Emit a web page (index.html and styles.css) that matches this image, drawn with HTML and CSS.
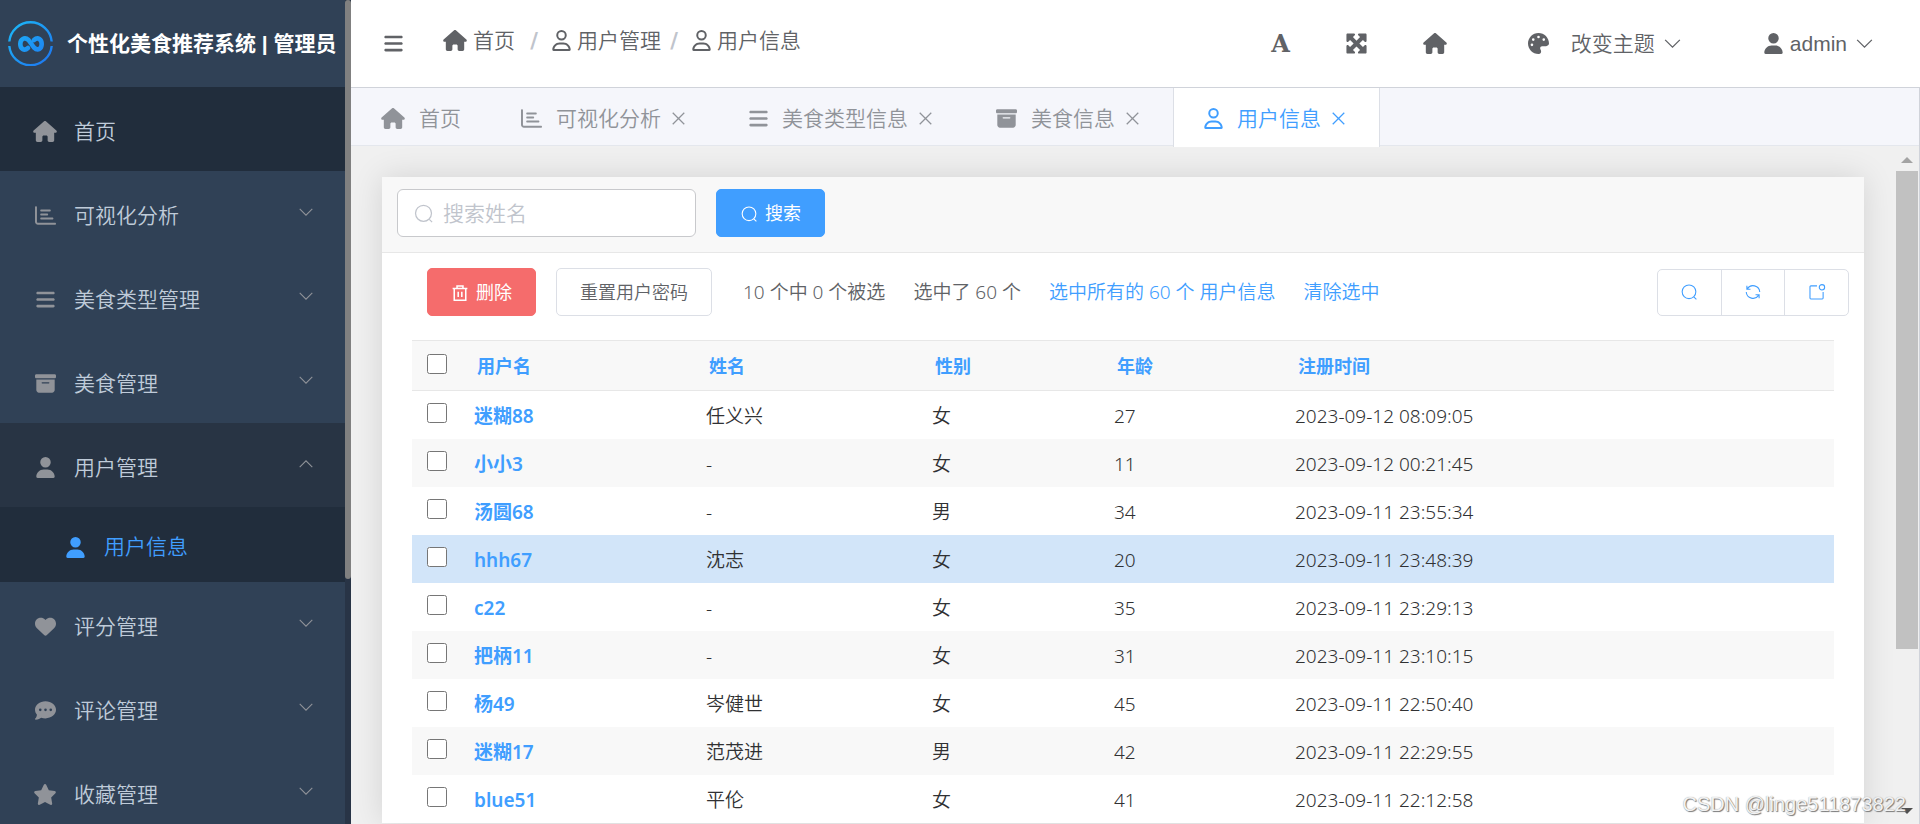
FILE: index.html
```html
<!DOCTYPE html>
<html lang="zh-CN">
<head>
<meta charset="utf-8">
<title>个性化美食推荐系统 | 管理员</title>
<link rel="stylesheet" href="styles.css">
</head>
<body>
<svg class="sprite" aria-hidden="true">
  <symbol id="house" viewBox="0 0 576 512"><path d="M575.8 255.500c0 18-15 32.100-32 32.100h-32l.7 160.200c0 2.700-.2 5.400-.5 8.100V472c0 22.100-17.900 40-40 40H392c-22.100 0-40-17.900-40-40V384c0-17.700-14.300-32-32-32H256c-17.700 0-32 14.300-32 32v88c0 22.100-17.900 40-40 40H104c-22.100 0-40-17.900-40-40V287.600H32c-18 0-32-14-32-32.100c0-9 3-17 10-24L266.400 8c7-7 15-8 22-8s15 2 21 7L564.800 231.500c8 7 12 15 11 24z"/></symbol>
  <symbol id="user" viewBox="0 0 448 512"><path d="M224 256A128 128 0 1 0 224 0a128 128 0 1 0 0 256zm-45.700 48C79.800 304 0 383.800 0 482.300C0 498.700 13.300 512 29.700 512H418.300c16.400 0 29.700-13.300 29.700-29.700C448 383.800 368.200 304 269.700 304H178.300z"/></symbol>
  <symbol id="user-line" viewBox="0 0 448 512"><path d="M304 128a80 80 0 1 0 -160 0 80 80 0 1 0 160 0zM96 128a128 128 0 1 1 256 0A128 128 0 1 1 96 128zM49.300 464H398.700c-8.900-63.300-63.300-112-129-112H178.300c-65.700 0-120.100 48.700-129 112zM0 482.300C0 383.800 79.800 304 178.300 304h91.400C368.200 304 448 383.800 448 482.300c0 16.400-13.300 29.700-29.700 29.700H29.700C13.300 512 0 498.700 0 482.300z"/></symbol>
  <symbol id="bars" viewBox="0 0 448 512"><path d="M0 96C0 78.300 14.300 64 32 64H416c17.700 0 32 14.300 32 32s-14.300 32-32 32H32C14.300 128 0 113.700 0 96zM0 256c0-17.700 14.300-32 32-32H416c17.700 0 32 14.300 32 32s-14.300 32-32 32H32c-17.700 0-32-14.300-32-32zM448 416c0 17.700-14.300 32-32 32H32c-17.700 0-32-14.300-32-32s14.300-32 32-32H416c17.700 0 32 14.300 32 32z"/></symbol>
  <symbol id="box" viewBox="0 0 512 512"><path d="M32 32H480c17.700 0 32 14.300 32 32V96c0 17.700-14.300 32-32 32H32C14.300 128 0 113.700 0 96V64C0 46.300 14.300 32 32 32zm0 128H480V416c0 35.300-28.700 64-64 64H96c-35.300 0-64-28.700-64-64V160zm128 80c0 8.800 7.200 16 16 16H336c8.800 0 16-7.200 16-16s-7.200-16-16-16H176c-8.800 0-16 7.200-16 16z"/></symbol>
  <symbol id="chart" viewBox="0 0 512 512"><path d="M24 32c13.300 0 24 10.700 24 24V408c0 13.300 10.700 24 24 24H488c13.300 0 24 10.700 24 24s-10.700 24-24 24H72c-39.800 0-72-32.200-72-72V56C0 42.700 10.700 32 24 32zM128 136c0-13.300 10.700-24 24-24l208 0c13.300 0 24 10.700 24 24s-10.700 24-24 24l-208 0c-13.300 0-24-10.700-24-24zm24 72H296c13.300 0 24 10.700 24 24s-10.700 24-24 24H152c-13.300 0-24-10.700-24-24s10.700-24 24-24zm0 96H424c13.300 0 24 10.700 24 24s-10.700 24-24 24H152c-13.300 0-24-10.700-24-24s10.700-24 24-24z"/></symbol>
  <symbol id="heart" viewBox="0 0 512 512"><path d="M47.600 300.400L228.300 469.100c7.500 7 17.400 10.900 27.700 10.900s20.200-3.900 27.700-10.900L464.400 300.400c30.400-28.300 47.600-68 47.600-109.500v-5.800c0-69.900-50.500-129.500-119.400-141C347 36.500 300.600 51.400 268 84L256 96 244 84c-32.600-32.600-79-47.500-124.600-39.900C50.500 55.600 0 115.200 0 185.100v5.800c0 41.500 17.200 81.200 47.600 109.500z"/></symbol>
  <symbol id="comment" viewBox="0 0 512 512"><path fill-rule="evenodd" d="M256 448c141.400 0 256-93.100 256-208S397.400 32 256 32S0 125.100 0 240c0 45.100 17.700 86.800 47.700 120.900c-1.900 24.500-11.400 46.300-21.400 62.900c-5.500 9.200-11.100 16.600-15.200 21.600c-2.100 2.500-3.700 4.400-4.900 5.700l-1.600 1.700c-4.600 4.600-5.900 11.400-3.400 17.400c2.500 6 8.300 9.900 14.800 9.900c28.700 0 57.600-8.900 81.600-19.300c22.900-10 42.400-21.900 54.300-30.600c31.800 11.500 67 17.900 104.100 17.900zM128 208a32 32 0 1 1 0 64 32 32 0 1 1 0-64zm128 0a32 32 0 1 1 0 64 32 32 0 1 1 0-64zm128 0a32 32 0 1 1 0 64 32 32 0 1 1 0-64z"/></symbol>
  <symbol id="star" viewBox="0 0 576 512"><path d="M316.900 18C311.600 7 300.400 0 288.100 0s-23.400 7-28.800 18L195 150.300 51.400 171.500c-12 1.800-22 10.200-25.700 21.700s-.7 24.200 7.900 32.700L137.800 329 113.200 474.700c-2 12 3 24.200 12.900 31.300s23 8 33.800 2.300l128.300-68.500 128.300 68.500c10.800 5.700 23.900 4.900 33.800-2.300s14.900-19.300 12.900-31.300L438.500 329 542.700 225.900c8.600-8.500 11.700-21.200 7.900-32.700s-13.700-19.900-25.700-21.700L381.200 150.300 316.900 18z"/></symbol>
  <symbol id="palette" viewBox="0 0 512 512"><path fill-rule="evenodd" d="M512 256c0 .9 0 1.800 0 2.700c-.4 36.500-33.600 61.300-70.100 61.300H344c-26.500 0-48 21.500-48 48c0 3.400 .4 6.700 1 9.900c2.100 10.200 6.500 20 10.800 29.900c6.100 13.800 12.100 27.500 12.100 42c0 31.800-21.600 60.700-53.400 62c-3.500 .1-7 .2-10.600 .2C114.600 512 0 397.400 0 256S114.600 0 256 0S512 114.600 512 256zM128 288a32 32 0 1 0 -64 0 32 32 0 1 0 64 0zm0-96a32 32 0 1 0 0-64 32 32 0 1 0 0 64zM288 96a32 32 0 1 0 -64 0 32 32 0 1 0 64 0zm96 96a32 32 0 1 0 0-64 32 32 0 1 0 0 64z"/></symbol>
  <symbol id="expand" viewBox="0 0 512 512"><path d="M200 32H56C42.700 32 32 42.700 32 56V200c0 9.700 5.800 18.500 14.800 22.200s19.300 1.700 26.200-5.200l40-40 79 79-79 79L73 295c-6.900-6.900-17.200-8.900-26.200-5.200S32 302.300 32 312V456c0 13.300 10.700 24 24 24H200c9.700 0 18.500-5.800 22.200-14.800s1.700-19.300-5.200-26.200l-40-40 79-79 79 79-40 40c-6.900 6.900-8.900 17.200-5.200 26.200s12.500 14.800 22.200 14.800H456c13.300 0 24-10.700 24-24V312c0-9.700-5.800-18.500-14.800-22.200s-19.300-1.700-26.200 5.200l-40 40-79-79 79-79 40 40c6.900 6.900 17.200 8.900 26.200 5.200s14.800-12.500 14.800-22.200V56c0-13.300-10.700-24-24-24H312c-9.700 0-18.500 5.800-22.200 14.800s-1.700 19.300 5.200 26.200l40 40-79 79-79-79 40-40c6.900-6.900 8.900-17.200 5.200-26.200S209.700 32 200 32z"/></symbol>
  <symbol id="down" viewBox="0 0 20 20"><path class="line" d="M3 6.500 10 13.500 17 6.500"/></symbol>
  <symbol id="up" viewBox="0 0 20 20"><path class="line" d="M3 13.500 10 6.500 17 13.500"/></symbol>
  <symbol id="close" viewBox="0 0 20 20"><path class="line" d="M4.500 4.500 15.500 15.500M15.500 4.500 4.500 15.500"/></symbol>
  <symbol id="search" viewBox="0 0 20 20"><path class="line" d="M10 2.200a7.600 7.600 0 1 1 0 15.200a7.600 7.600 0 1 1 0-15.200M15.300 15.400 18.200 18.200"/></symbol>
  <symbol id="trash" viewBox="0 0 20 20"><path class="line thick" d="M1.800 5H18.200M6.700 5V2.200H13.300V5M3.600 5V18H16.400V5M8 8.500V14.500M12 8.500V14.500"/></symbol>
  <symbol id="refresh" viewBox="0 0 20 20"><path class="line" d="M3.200 3V7H7.200M3.600 6.600A7.500 7.500 0 0 1 17.500 10M16.800 17V13H12.800M16.400 13.400A7.500 7.500 0 0 1 2.500 10"/></symbol>
  <symbol id="badge" viewBox="0 0 20 20"><path class="line" d="M10 3.200H3.200a1 1 0 0 0-1 1V16.800a1 1 0 0 0 1 1H15.800a1 1 0 0 0 1-1V10M15.500 1.800a3 3 0 1 1 0 6a3 3 0 1 1 0-6"/></symbol>
</svg>

<aside class="sidebar">
  <div class="sidebar-body">
    <div class="brand">
      <svg class="logo" viewBox="0 0 45 45" aria-hidden="true">
        <defs><linearGradient id="g" gradientUnits="userSpaceOnUse" x1="0" y1="0" x2="45" y2="45"><stop offset="0" stop-color="#1cbcf8"/><stop offset="1" stop-color="#1e72f0"/></linearGradient></defs>
        <path stroke="url(#g)" stroke-width="2.400" d="M1.300 20.500A21.300 21.300 0 0 1 43.700 20.500M1.300 25A21.300 21.300 0 0 0 43.700 25"/>
        <path stroke="url(#g)" stroke-width="4.600" stroke-linecap="round" d="M20 27C16 30.500 12.300 27.500 12.300 23C12.300 18.500 16.500 15.200 20.500 19L26 26.500C30 30.500 33.700 27.500 33.700 23C33.700 18.500 30 15.500 26 19"/>
      </svg>
      <strong>个性化美食推荐系统 | 管理员</strong>
    </div>
    <nav class="menu">
      <a class="item dark" href="#"><span class="ico"><svg class="w24"><use href="#house"/></svg></span>首页</a>
      <a class="item" href="#"><span class="ico"><svg class="w21"><use href="#chart"/></svg></span>可视化分析<svg class="arrow"><use href="#down"/></svg></a>
      <a class="item" href="#"><span class="ico"><svg class="w18"><use href="#bars"/></svg></span>美食类型管理<svg class="arrow"><use href="#down"/></svg></a>
      <a class="item" href="#"><span class="ico"><svg class="w21"><use href="#box"/></svg></span>美食管理<svg class="arrow"><use href="#down"/></svg></a>
      <a class="item open" href="#"><span class="ico"><svg class="w18"><use href="#user"/></svg></span>用户管理<svg class="arrow"><use href="#up"/></svg></a>
      <a class="item sub" href="#"><span class="ico"><svg class="w18"><use href="#user"/></svg></span>用户信息</a>
      <a class="item" href="#"><span class="ico"><svg class="w21"><use href="#heart"/></svg></span>评分管理<svg class="arrow"><use href="#down"/></svg></a>
      <a class="item" href="#"><span class="ico"><svg class="w21"><use href="#comment"/></svg></span>评论管理<svg class="arrow"><use href="#down"/></svg></a>
      <a class="item" href="#"><span class="ico"><svg class="w24"><use href="#star"/></svg></span>收藏管理<svg class="arrow"><use href="#down"/></svg></a>
    </nav>
  </div>
  <div class="side-rail"><div class="side-thumb"></div></div>
</aside>

<main class="main">
  <header class="topbar">
    <button class="plain" aria-label="折叠菜单"><svg class="w18"><use href="#bars"/></svg></button>
    <nav class="crumbs">
      <a href="#"><svg class="w24"><use href="#house"/></svg>首页</a><span class="slash first">/</span>
      <a href="#"><svg class="w18"><use href="#user-line"/></svg>用户管理</a><span class="slash">/</span>
      <a href="#"><svg class="w18"><use href="#user-line"/></svg>用户信息</a>
    </nav>
    <div class="tools">
      <button class="plain letter" aria-label="字体大小">A</button>
      <button class="plain" aria-label="全屏"><svg class="w23"><use href="#expand"/></svg></button>
      <button class="plain" aria-label="主页"><svg class="w24"><use href="#house"/></svg></button>
      <button class="plain theme"><svg class="w21"><use href="#palette"/></svg><span>改变主题</span><svg class="w21"><use href="#down"/></svg></button>
      <button class="plain account"><svg class="w18"><use href="#user"/></svg><span>admin</span><svg class="w21"><use href="#down"/></svg></button>
    </div>
  </header>

  <div class="frame">
    <nav class="tabs">
      <a class="tab" href="#"><svg class="w24"><use href="#house"/></svg>首页</a>
      <a class="tab" href="#"><svg class="w21"><use href="#chart"/></svg>可视化分析<svg class="x"><use href="#close"/></svg></a>
      <a class="tab" href="#"><svg class="w18"><use href="#bars"/></svg>美食类型信息<svg class="x"><use href="#close"/></svg></a>
      <a class="tab" href="#"><svg class="w21"><use href="#box"/></svg>美食信息<svg class="x"><use href="#close"/></svg></a>
      <a class="tab active" href="#"><svg class="w18"><use href="#user-line"/></svg>用户信息<svg class="x"><use href="#close"/></svg></a>
    </nav>

    <div class="scroller">
      <section class="card">
        <form class="search">
          <label class="field"><svg><use href="#search"/></svg><input type="text" placeholder="搜索姓名" aria-label="搜索姓名"></label>
          <button class="btn primary" type="button"><svg><use href="#search"/></svg>搜索</button>
        </form>
        <div class="actions">
          <button class="btn danger"><svg><use href="#trash"/></svg>删除</button>
          <button class="btn">重置用户密码</button>
          <div class="counts">
            <span>10 个中 0 个被选</span>
            <span>选中了 60 个</span>
            <a href="#">选中所有的 60 个 用户信息</a>
            <a href="#">清除选中</a>
          </div>
          <div class="group">
            <button aria-label="搜索"><svg><use href="#search"/></svg></button>
            <button aria-label="刷新"><svg><use href="#refresh"/></svg></button>
            <button aria-label="导出"><svg><use href="#badge"/></svg></button>
          </div>
        </div>
        <table class="list">
          <colgroup><col class="c0"><col class="c1"><col class="c2"><col class="c3"><col class="c4"><col></colgroup>
          <thead><tr><th><input type="checkbox" aria-label="全选"></th><th>用户名</th><th>姓名</th><th>性别</th><th>年龄</th><th>注册时间</th></tr></thead>
          <tbody>
            <tr><td><input type="checkbox" aria-label="选择 迷糊88"></td><td><a href="#">迷糊88</a></td><td>任义兴</td><td>女</td><td>27</td><td>2023-09-12 08:09:05</td></tr>
            <tr><td><input type="checkbox" aria-label="选择 小小3"></td><td><a href="#">小小3</a></td><td>-</td><td>女</td><td>11</td><td>2023-09-12 00:21:45</td></tr>
            <tr><td><input type="checkbox" aria-label="选择 汤圆68"></td><td><a href="#">汤圆68</a></td><td>-</td><td>男</td><td>34</td><td>2023-09-11 23:55:34</td></tr>
            <tr class="hover"><td><input type="checkbox" aria-label="选择 hhh67"></td><td><a href="#">hhh67</a></td><td>沈志</td><td>女</td><td>20</td><td>2023-09-11 23:48:39</td></tr>
            <tr><td><input type="checkbox" aria-label="选择 c22"></td><td><a href="#">c22</a></td><td>-</td><td>女</td><td>35</td><td>2023-09-11 23:29:13</td></tr>
            <tr><td><input type="checkbox" aria-label="选择 把柄11"></td><td><a href="#">把柄11</a></td><td>-</td><td>女</td><td>31</td><td>2023-09-11 23:10:15</td></tr>
            <tr><td><input type="checkbox" aria-label="选择 杨49"></td><td><a href="#">杨49</a></td><td>岑健世</td><td>女</td><td>45</td><td>2023-09-11 22:50:40</td></tr>
            <tr><td><input type="checkbox" aria-label="选择 迷糊17"></td><td><a href="#">迷糊17</a></td><td>范茂进</td><td>男</td><td>42</td><td>2023-09-11 22:29:55</td></tr>
            <tr><td><input type="checkbox" aria-label="选择 blue51"></td><td><a href="#">blue51</a></td><td>平伦</td><td>女</td><td>41</td><td>2023-09-11 22:12:58</td></tr>
          </tbody>
        </table>
      </section>
      <div class="rail">
        <svg viewBox="0 0 22 22" aria-hidden="true"><path fill="#a3a3a3" d="M5 14 11 8 17 14z"/></svg>
        <div class="track"><div class="thumb"></div></div>
        <svg viewBox="0 0 22 22" aria-hidden="true"><path fill="#505050" d="M5 8 11 14 17 8z"/></svg>
      </div>
    </div>
  </div>
</main>
<div class="watermark">CSDN @linge511873822</div>
</body>
</html>
```
FILE: styles.css
```css
* { box-sizing: border-box; }

body {
  margin: 0;
  height: 100vh;
  display: flex;
  overflow: hidden;
  position: relative;
  background: #f0f0f0;
  color: #606266;
  font: 350 21px/30px "Liberation Sans", "Noto Sans CJK SC", sans-serif;
}

a { color: inherit; text-decoration: none; }

svg { display: block; flex: none; width: 21px; height: 21px; fill: currentColor; }
.sprite { position: absolute; width: 0; height: 0; }
.line { fill: none; stroke: currentColor; stroke-width: 1.2; }
.thick { stroke-width: 1.7; }
.w18 { width: 19px; }
.w21 { width: 21px; }
.w23 { width: 23px; height: 23px; }
.w24 { width: 24px; }

/* sidebar */
.sidebar { display: flex; flex: none; width: 351px; background: #304156; overflow: hidden; }
.sidebar-body { flex: 1; }
.brand { display: flex; align-items: center; gap: 14px; height: 87px; padding-left: 8px; color: #fff; white-space: nowrap; }
.brand strong { font-weight: 700; }
.logo { width: 45px; height: 45px; fill: none; }
.item { display: flex; align-items: center; height: 84px; padding: 5px 30px 0 30px; color: #bfcbd9; }
.ico { display: flex; justify-content: center; width: 30px; margin-right: 14px; color: #909399; }
.arrow { width: 18px; height: 18px; margin: 0 0 7px auto; color: #909399; }
.dark { background: #212d3c; }
.open { background: #283444; }
.sub { height: 75px; padding-left: 60px; background: #212d3c; color: #409eff; }
.sub .ico { color: inherit; }
.side-rail { width: 6px; background: #283446; }
.side-thumb { height: 579px; max-height: 100%; border-radius: 3px; background: #808080; }

/* top bar */
.main { flex: 1; min-width: 0; display: flex; flex-direction: column; }
.topbar { display: flex; align-items: center; flex: none; height: 87px; padding: 0 45px 0 33px; background: #fff; }
.plain { display: flex; align-items: center; padding: 0; border: 0; background: none; color: inherit; font: inherit; }
.crumbs { display: flex; align-items: center; margin: 0 0 6px 40px; }
.crumbs a { display: flex; align-items: center; gap: 6px; }
.slash { margin: 0 11px 0 6px; width: 14px; text-align: center; color: #c0c4cc; font-family: "DejaVu Sans", sans-serif; font-weight: 700; }
.first { margin-left: 12px; }
.tools { display: flex; align-items: center; gap: 55px; margin-left: auto; }
.letter { font: 700 24px/30px "DejaVu Serif", serif; }
.theme { margin-left: 26px; gap: 7px; }
.theme span { margin-left: 15px; }
.account { margin-left: 26px; gap: 7px; }

/* tabs */
.frame { flex: 1; min-height: 0; display: flex; flex-direction: column; border: solid #d0d3da; border-width: 1px 1px 0 0; }
.tabs { display: flex; flex: none; height: 58px; background: #f5f6fb; border-bottom: 1px solid #e4e7ed; }
.tab { display: flex; align-items: center; gap: 14px; height: 57px; padding: 4px 30px 0; color: #909399; white-space: nowrap; }
.x { margin-left: -7px; }
.active { height: 59px; padding-bottom: 2px; background: #fff; border: solid #dcdfe6; border-width: 0 1px; color: #409eff; }

/* content */
.scroller { flex: 1; min-height: 0; display: flex; padding: 0 1px 0 31px; overflow: hidden; }
.card { flex: 1; align-self: flex-start; margin: 31px 32px 0 0; background: #fff; box-shadow: 0 0 30px rgba(0, 0, 0, .12); }
.search { display: flex; gap: 20px; padding: 12px 15px 15px; background: #f8f8f8; border-bottom: 1px solid #e7e7e7; }
.field { display: flex; align-items: center; gap: 9px; width: 299px; height: 48px; padding: 0 15px; background: #fff; border: 1px solid #c8c9cc; border-radius: 6px; color: #c0c4cc; }
.field input { flex: 1; min-width: 0; padding: 2px 0 0; border: 0; outline: 0; background: none; font: inherit; color: #606266; }
.field input::placeholder { color: #c0c4cc; }
.btn { display: flex; align-items: center; gap: 7px; height: 48px; padding: 2px 23px 0; border: 1px solid #dcdfe6; border-radius: 5px; background: #fff; color: #606266; font: inherit; font-size: 18px; white-space: nowrap; }
.btn svg { width: 18px; height: 18px; }
.primary { background: #409eff; border-color: #409eff; color: #fff; font-weight: 400; }
.danger { background: #f56c6c; border-color: #f56c6c; color: #fff; font-weight: 400; }

.actions { display: flex; align-items: center; gap: 20px; padding: 15px 15px 24px 45px; }
.counts { display: flex; gap: 28px; margin-left: 11px; font: 350 19px/28px "Noto Sans", "Noto Sans CJK SC", sans-serif; white-space: nowrap; }
.counts a { color: #409eff; }
.group { display: flex; width: 192px; margin-left: auto; height: 47px; border: 1px solid #dcdfe6; border-radius: 5px; }
.group button { display: flex; flex: 1; align-items: center; justify-content: center; padding: 0; border: 0; background: none; color: #409eff; }
.group button + button { border-left: 1px solid #dcdfe6; }
.group svg { width: 18px; height: 18px; }

.list { width: calc(100% - 60px); margin: 0 30px; border-collapse: collapse; table-layout: fixed; color: #303133; font: 350 19px/24px "Noto Sans", "Noto Sans CJK SC", sans-serif; }
.c0 { width: 50px; }
.c1 { width: 232px; }
.c2 { width: 226px; }
.c3 { width: 182px; }
.c4 { width: 181px; }
.list th { height: 50px; padding: 0 15px; background: #f8f8f8; border: solid #e7e7e7; border-width: 1px 0; color: #409eff; font-size: 18px; font-weight: 700; text-align: left; }
.list td { height: 48px; padding: 2px 12px 0; }
.list th:first-child, .list td:first-child { padding: 0 0 4px 15px; }
.list tr:nth-child(even) td { background: #f8f8f8; }
.list tr.hover td { background: #d2e5f9; }
.list a { color: #409eff; font-weight: 600; }
.list input { display: block; width: 20px; height: 20px; margin: 0; }

.rail { display: flex; flex-direction: column; width: 22px; padding: 3px 0 2px; }
.rail svg { width: 22px; height: 22px; }
.track { flex: 1; }
.thumb { height: 76%; background: #c1c1c1; }

.watermark { position: absolute; right: 14px; bottom: 5px; color: #f2f2f2; font-size: 20px; text-shadow: 1px 1px 1px #777, 0 0 1px #999; }
```
